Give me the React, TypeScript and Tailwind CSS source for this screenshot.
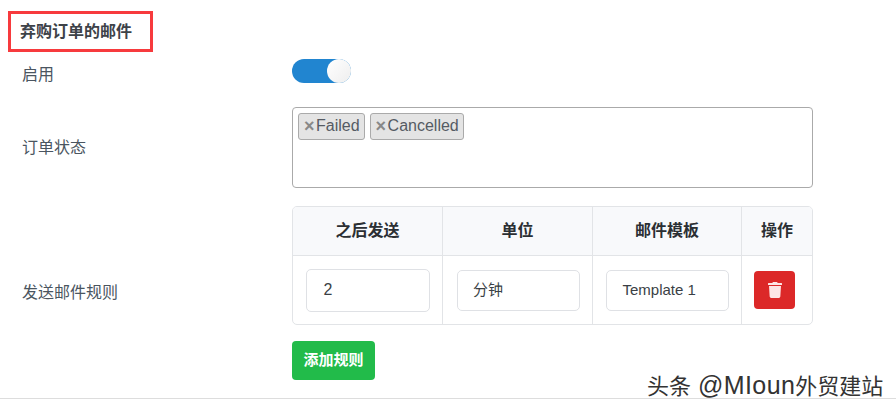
import { FaTrash } from 'react-icons/fa';

const font = { fontFamily: '"Liberation Sans", "Noto Sans CJK SC", sans-serif' };

const headers = [
  { label: '之后发送', width: 'w-[150px]' },
  { label: '单位', width: 'w-[150px]' },
  { label: '邮件模板', width: 'w-[149px]' },
  { label: '操作', width: 'flex-1' },
];

function Tag({ label }: { label: string }) {
  return (
    <span className="flex h-[27px] items-center rounded-[3px] border border-[#aaaaaa] bg-[#e4e4e4] pb-[2px] pl-[5px] pr-[4px] text-[16px] text-[#555b63]">
      <span className="mr-[2px] w-[10px] text-center text-[18px] font-bold leading-none text-[#888888]">×</span>
      {label}
    </span>
  );
}

export default function App() {
  return (
    <div className="relative h-[411px] w-[896px] overflow-hidden bg-white" style={font}>
      <div className="pt-[11px]">
        <div className="ml-2 flex h-[41px] w-[145px] items-center border-[3px] border-[#f73a3d] pl-[9px] text-[16px] font-bold text-[#3d4248]">
          弃购订单的邮件
        </div>

        <div className="mt-[7px] flex h-[24px] items-center pl-[22px]">
          <div className="w-[270px] pt-[8px] text-[16px] text-[#4a5560]">启用</div>
          <div className="flex h-[24px] w-[59px] justify-end rounded-full bg-[#2185d0]">
            <div className="h-[24px] w-[24px] rounded-full bg-gradient-to-br from-white to-[#eeeeee]" />
          </div>
        </div>

        <div className="mt-[24px] flex h-[81px] items-center pl-[22px]">
          <div className="w-[270px] text-[16px] text-[#4a5560]">订单状态</div>
          <div className="h-[81px] w-[521px] rounded border border-[#aaaaaa] pl-[5px] pt-[5px]">
            <div className="flex gap-[5px]">
              <Tag label="Failed" />
              <Tag label="Cancelled" />
            </div>
          </div>
        </div>

        <div className="mt-[18px] flex pl-[22px]">
          <div className="flex h-[119px] w-[270px] items-center pt-[54px] text-[16px] text-[#4a5560]">发送邮件规则</div>
          <div className="w-[521px]">
            <div className="h-[119px] overflow-hidden rounded-[5px] border border-[#e2e4e7]">
              <div className="flex h-[49px] border-b border-[#e2e4e7] bg-[#f8f9fb]">
                {headers.map((h, i) => (
                  <div
                    key={h.label}
                    className={`${h.width} flex items-center justify-center text-[16px] font-bold text-[#2b2f33] ${i < 3 ? 'border-r border-[#e2e4e7]' : ''}`}
                  >
                    {h.label}
                  </div>
                ))}
              </div>
              <div className="flex h-[68px]">
                <div className="flex w-[150px] items-center justify-center border-r border-[#e2e4e7]">
                  <div className="flex h-[43px] w-[124px] items-center rounded-[5px] border border-[#dfe1e5] pl-[17px] text-[16px] text-[#3a3f45]">2</div>
                </div>
                <div className="flex w-[150px] items-center border-r border-[#e2e4e7] pl-[14px]">
                  <div className="flex h-[41px] w-[123px] items-center rounded-[5px] border border-[#dfe1e5] pl-[15px] text-[15px] text-[#3a3f45]">分钟</div>
                </div>
                <div className="flex w-[149px] items-center justify-center border-r border-[#e2e4e7]">
                  <div className="flex h-[41px] w-[123px] items-center rounded-[5px] border border-[#dfe1e5] pl-[16px] text-[15px] text-[#3a3f45]">Template 1</div>
                </div>
                <div className="flex flex-1 items-center pl-[12px]">
                  <button className="flex h-[38px] w-[41px] items-center justify-center rounded-[4px] bg-[#dc2828]">
                    <FaTrash size={16} className="text-[#fde4e4]" />
                  </button>
                </div>
              </div>
            </div>
            <button className="mt-[16px] flex h-[39px] w-[83px] items-center justify-center rounded-[4px] bg-[#22bb4a] text-[15px] font-bold text-white">
              添加规则
            </button>
          </div>
        </div>

        <div className="mt-[18px] h-px w-full bg-[#dddddd]" />
      </div>

      <div className="absolute left-[647px] top-[373px] flex h-[26px] items-center text-[22px] text-[#333333]">
        <span className="mr-[7px]">头条</span>
        <span className="text-[25px] tracking-[0.4px]">@MIoun</span>
        <span>外贸建站</span>
      </div>
    </div>
  );
}
